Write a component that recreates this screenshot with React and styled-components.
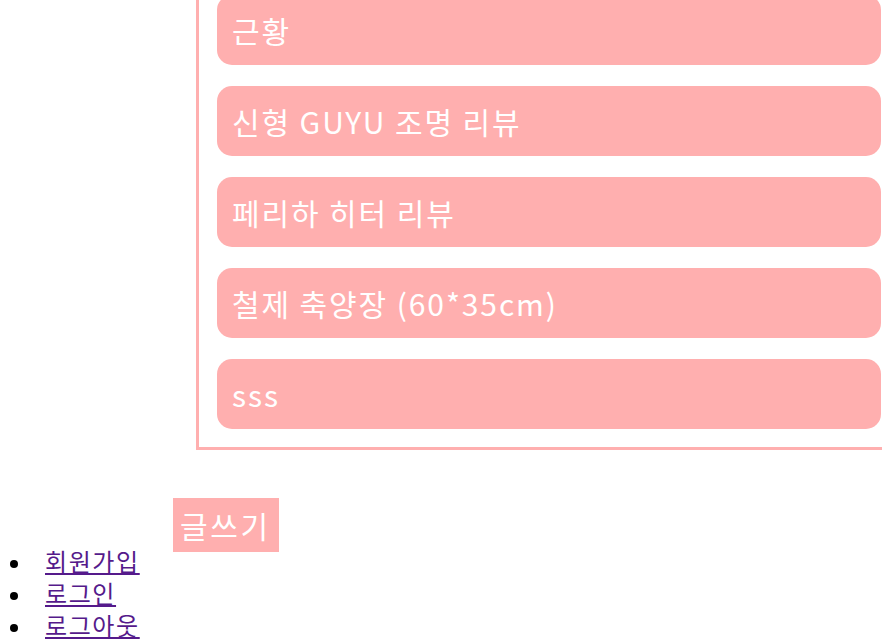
import React from 'react';
import styled, { createGlobalStyle } from 'styled-components';

const GlobalStyle = createGlobalStyle`
  html, body {
    margin: 0;
    overflow-x: hidden;
    background: #fff;
  }
  body {
    font-family: "Noto Sans CJK KR", "Noto Sans", sans-serif;
  }
`;

const PINK = '#ffafaf';

const PostBox = styled.div`
  box-sizing: border-box;
  width: 80vw;
  margin: -26px 0 0 196px;
  padding: 18px;
  border: 3px solid ${PINK};
  display: flex;
  flex-direction: column;
  gap: 21px;
`;

const PostItem = styled.div`
  height: 70px;
  display: flex;
  align-items: center;
  padding: 0 15px;
  border-radius: 15px;
  background-color: ${PINK};
  color: white;
  font-size: 30px;
  letter-spacing: 1.9px;
  white-space: nowrap;
`;

const WriteRow = styled.div`
  margin: 48px 0 0 173px;
`;

const WriteButton = styled.span`
  display: inline-block;
  height: 54px;
  line-height: 54px;
  padding: 0 8px 0 7px;
  background-color: ${PINK};
  color: white;
  font-size: 30px;
  letter-spacing: 2.6px;
`;

const Menu = styled.ul`
  margin: -7px 0 0;
  padding-left: 45px;
  list-style: none;
  font-size: 24px;
  line-height: 32px;
  letter-spacing: 1.6px;
`;

const MenuItem = styled.li`
  height: 32px;

  &::before {
    content: "";
    display: inline-block;
    width: 8px;
    height: 8px;
    margin: 0 27px 0 -35px;
    border-radius: 50%;
    background: #000;
    vertical-align: middle;
  }
`;

const MenuLink = styled.a`
  color: #551a8b;
`;

const posts = ['근황', '신형 GUYU 조명 리뷰', '페리하 히터 리뷰', '철제 축양장 (60*35cm)', 'sss'];
const menu = ['회원가입', '로그인', '로그아웃'];

function App() {
  return (
    <>
      <GlobalStyle />
      <PostBox>
        {posts.map((title) => (
          <PostItem key={title}>{title}</PostItem>
        ))}
      </PostBox>
      <WriteRow>
        <WriteButton>글쓰기</WriteButton>
      </WriteRow>
      <Menu>
        {menu.map((label) => (
          <MenuItem key={label}>
            <MenuLink href="#">{label}</MenuLink>
          </MenuItem>
        ))}
      </Menu>
    </>
  );
}

export default App;
